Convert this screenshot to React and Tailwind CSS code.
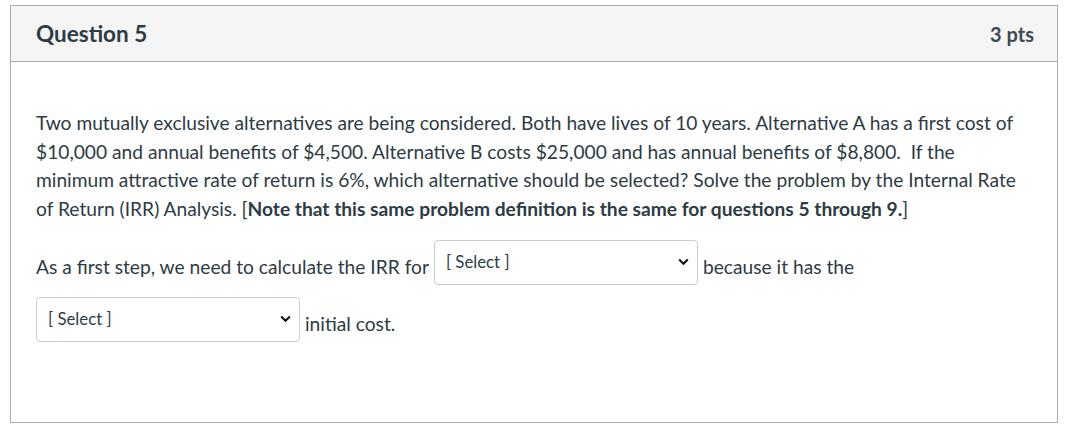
import { useState } from 'react';

function Dropdown({ value, onChange }) {
    return (
        <div className="relative inline-block w-[264px] h-[45px]">
            <select
                value={value}
                onChange={(e) => onChange(e.target.value)}
                className="appearance-none w-full h-full bg-white border border-[#c7cdd1] rounded-[4px] pl-[11px] pr-8 pb-[1px] text-[16.8px] text-[#2d3b45] outline-none"
                style={{ fontFamily: 'Lato, "Open Sans", sans-serif' }}
            >
                <option value="">[ Select ]</option>
                <option value="A">Alternative A</option>
                <option value="B">Alternative B</option>
                <option value="lower">lower</option>
                <option value="higher">higher</option>
            </select>
            <svg
                className="absolute right-[9px] top-[18px] pointer-events-none"
                width="11" height="8" viewBox="0 0 11 8" fill="none"
            >
                <path d="M1.2 1.5 L5.5 5.8 L9.8 1.5" stroke="#111" strokeWidth="2" />
            </svg>
        </div>
    );
}

export default function App() {
    const [first, setFirst] = useState('');
    const [second, setSecond] = useState('');

    return (
        <div className="bg-white w-[1066px] h-[433px] pt-[5px] pl-[10px]" style={{ fontFamily: 'Lato, "Open Sans", sans-serif' }}>
            <div className="w-[1048px] h-[418px] border border-[#adadad] text-[#2d3b45]">
                <div className="h-[56px] bg-[#f5f5f5] border-b border-[#adadad] flex items-center justify-between pl-[25px] pr-[23px]">
                    <h2 className="text-[22.5px] font-bold">Question 5</h2>
                    <span className="text-[20px] font-bold text-[#3d4a53]">3 pts</span>
                </div>

                <div className="pl-[25px] pr-[20px] pt-[47px]">
                    <p className="text-[19.2px] leading-[28.6px]">
                        Two mutually exclusive alternatives are being considered. Both have lives of 10 years. Alternative A has a first cost of $10,000 and annual benefits of $4,500. Alternative B costs $25,000 and has annual benefits of $8,800.&nbsp; If the minimum attractive rate of return is 6%, which alternative should be selected? Solve the problem by the Internal Rate of Return (IRR) Analysis. [<strong>Note that this same problem definition is the same for questions 5 through 9.</strong>]
                    </p>

                    <div className="mt-[17px] flex flex-wrap items-center gap-x-[5px] gap-y-[12px] text-[19.2px] leading-[28px]">
                        <span className="mt-[9px]">As a first step, we need to calculate the IRR for</span>
                        <Dropdown value={first} onChange={setFirst} />
                        <span className="mt-[9px]">because it has the</span>
                        <Dropdown value={second} onChange={setSecond} />
                        <span className="mt-[9px]">initial cost.</span>
                    </div>
                </div>
            </div>
        </div>
    );
}
